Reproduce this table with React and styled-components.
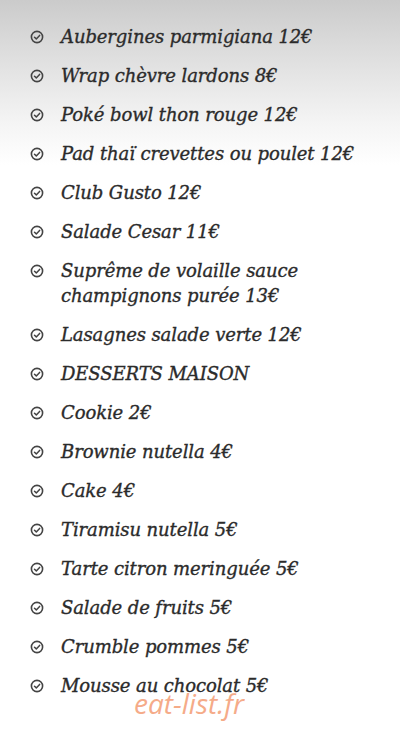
import React from "react";
import styled, { createGlobalStyle } from "styled-components";

const GlobalStyle = createGlobalStyle`
  html, body {
    margin: 0;
    padding: 0;
    background: #fff;
  }
`;

const Page = styled.div`
  position: relative;
  width: 400px;
  height: 744px;
  overflow: hidden;
  background: linear-gradient(
    180deg,
    #cbcbcb 0px,
    #d9d9d9 40px,
    #e8e8e8 85px,
    #f5f5f5 125px,
    #ffffff 165px
  );
  font-family: "DejaVu Serif", "Liberation Serif", serif;
`;

const List = styled.ul`
  list-style: none;
  margin: 0;
  padding: 24px 0 0 30px;
  display: flex;
  flex-direction: column;
  gap: 14px;
`;

const Item = styled.li`
  display: flex;
  align-items: flex-start;
  gap: 17px;
  font-size: 18px;
  line-height: 25px;
  font-style: italic;
  color: #2b2b2b;
  -webkit-text-stroke: 0.35px #2b2b2b;
`;

const IconBox = styled.span`
  flex: none;
  width: 14px;
  height: 25px;
  display: flex;
  align-items: center;
`;

const Label = styled.span`
  max-width: 300px;
  letter-spacing: -0.1px;
`;

const Watermark = styled.div`
  position: absolute;
  left: 134px;
  top: 684px;
  font-family: "Open Sans", "Noto Sans", sans-serif;
  font-style: italic;
  font-size: 28px;
  color: #f5a27c;
  opacity: 0.9;
`;

const CheckIcon = () => (
  <svg width="14" height="14" viewBox="0 0 14 14">
    <circle cx="7" cy="7" r="5.6" fill="none" stroke="#444" strokeWidth="1.6" />
    <path d="M4.5 7.2 L6.3 8.9 L9.6 5.4" fill="none" stroke="#444" strokeWidth="1.5" strokeLinecap="round" strokeLinejoin="round" />
  </svg>
);

const items = [
  "Aubergines parmigiana 12€",
  "Wrap chèvre lardons 8€",
  "Poké bowl thon rouge 12€",
  "Pad thaï crevettes ou poulet 12€",
  "Club Gusto 12€",
  "Salade Cesar 11€",
  "Suprême de volaille sauce champignons purée 13€",
  "Lasagnes salade verte 12€",
  "DESSERTS MAISON",
  "Cookie 2€",
  "Brownie nutella 4€",
  "Cake 4€",
  "Tiramisu nutella 5€",
  "Tarte citron meringuée 5€",
  "Salade de fruits 5€",
  "Crumble pommes 5€",
  "Mousse au chocolat 5€",
];

export default function App() {
  return (
    <>
      <GlobalStyle />
      <Page>
        <List>
          {items.map((text) => (
            <Item key={text}>
              <IconBox>
                <CheckIcon />
              </IconBox>
              <Label>{text}</Label>
            </Item>
          ))}
        </List>
        <Watermark>eat-list.fr</Watermark>
      </Page>
    </>
  );
}
